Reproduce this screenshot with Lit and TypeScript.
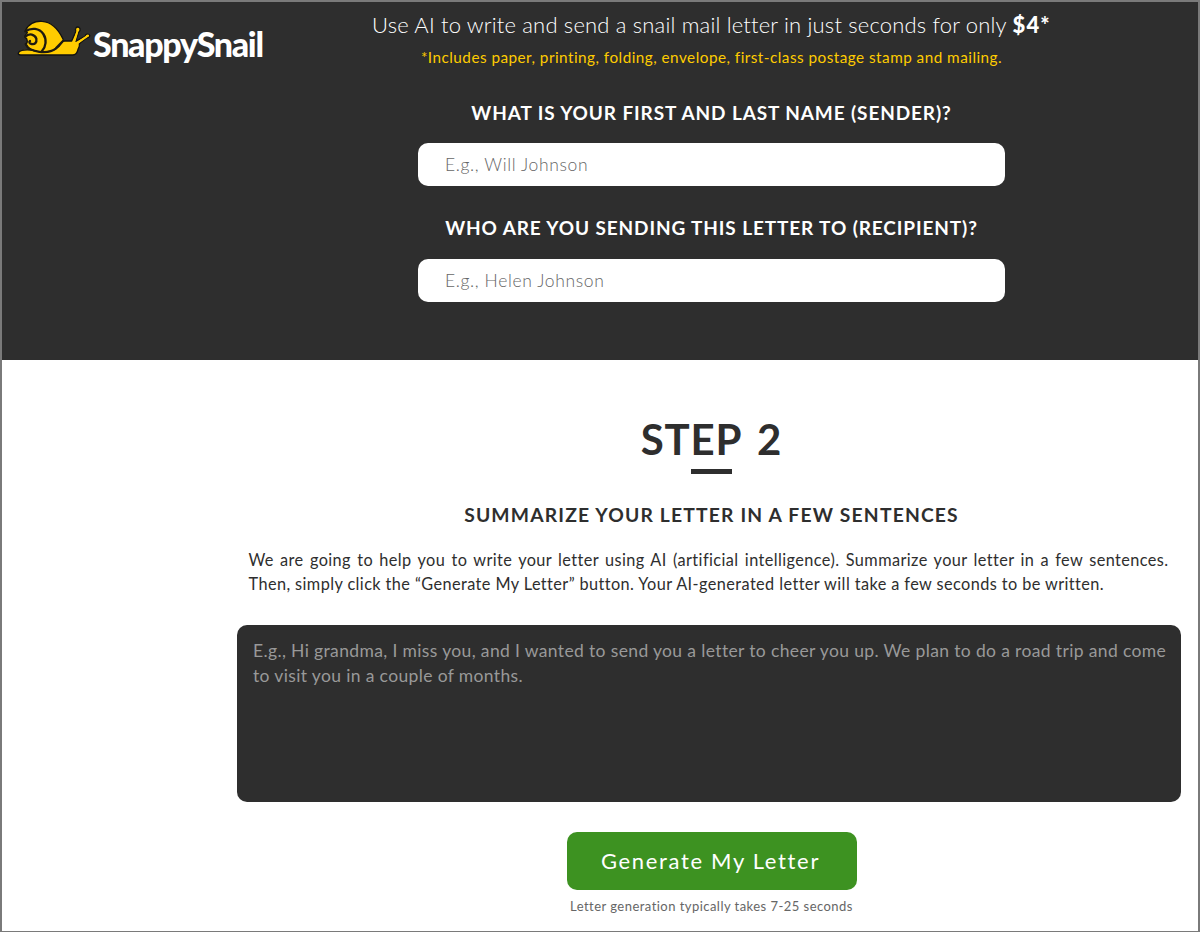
import { LitElement, css, html } from "lit";
import { customElement, property } from "lit/decorators.js";

@customElement("snail-logo")
export class SnailLogo extends LitElement {
  render() {
    return html`
      <a class="logo">
        <svg class="snail" viewBox="51 57 222 114" width="74" height="38">
          <path
            class="body"
            d="M56 157C62 149 78 149 92 150L150 152C166 146 178 124 194 123L215 123L228 94C223 85 230 79 237 82C243 88 240 93 236 96L227 124L256 108C256 101 266 101 269 106C269 112 264 114 259 114L238 131C240 137 237 142 234 148C232 159 228 164 218 165L62 165C56 165 53 162 56 157Z"
          />
          <path class="feeler" d="M222 128L234 88M228 132L264 107" />
          <path
            class="body"
            d="M77 91C84 73 104 62 126 64C160 66 178 94 189 117C192 122 189 123 187 126C176 145 158 156 132 156C105 156 84 148 76 132C84 130 84 116 75 112C75 106 77 102 82 98Z"
          />
          <path
            class="line"
            d="M76 94C94 82 118 84 130 102C141 119 138 140 126 153"
          />
          <path
            class="line"
            d="M76 110C88 98 105 103 109 116C111 128 104 134 95 132C88 131 86 126 90 123"
          />
          <path class="line" d="M78 134C88 158 146 163 167 146L189 123" />
        </svg>
        <span class="name">SnappySnail</span>
      </a>
    `;
  }

  static styles = css`
    .logo {
      display: flex;
      align-items: flex-start;
      padding: 17px 0 0 15px;
    }
    .snail {
      flex: none;
    }
    .body {
      fill: #fc0;
      stroke: #111;
      stroke-width: 4;
      stroke-linejoin: round;
    }
    .feeler {
      fill: none;
      stroke: #fc0;
      stroke-width: 6;
      stroke-linecap: round;
    }
    .line {
      fill: none;
      stroke: #1d1a10;
      stroke-width: 7;
      stroke-linecap: round;
      stroke-linejoin: round;
    }
    .name {
      margin: 5px 0 0 2px;
      color: #fff;
      font: 900 34px/40px Lato, sans-serif;
      letter-spacing: -1.3px;
    }
  `;
}

@customElement("name-field")
export class NameField extends LitElement {
  @property() label = "";
  @property() placeholder = "";

  render() {
    return html`
      <label>
        <span class="label">${this.label}</span>
        <input type="text" placeholder=${this.placeholder} />
      </label>
    `;
  }

  static styles = css`
    :host {
      display: block;
    }
    label {
      display: flex;
      flex-direction: column;
      align-items: center;
    }
    .label {
      color: #fff;
      font-size: 19px;
      font-weight: 700;
      line-height: 24px;
      letter-spacing: 0.88px;
      white-space: nowrap;
    }
    input {
      box-sizing: border-box;
      width: 587px;
      height: 43px;
      margin-top: var(--input-gap, 18px);
      padding: 0 27px;
      border: 0;
      border-radius: 10px;
      background: #fff;
      font: 300 17.5px Lato, sans-serif;
      letter-spacing: 0.63px;
    }
    input::placeholder {
      color: #666;
    }
  `;
}

@customElement("app-root")
export class AppRoot extends LitElement {
  render() {
    return html`
      <header>
        <snail-logo></snail-logo>
        <div class="column">
          <p class="offer">
            Use AI to write and send a snail mail letter in just seconds for
            only <b>$4*</b>
          </p>
          <p class="includes">
            *Includes paper, printing, folding, envelope, first-class postage
            stamp and mailing.
          </p>
          <name-field
            class="sender"
            label="WHAT IS YOUR FIRST AND LAST NAME (SENDER)?"
            placeholder="E.g., Will Johnson"
          ></name-field>
          <name-field
            class="recipient"
            label="WHO ARE YOU SENDING THIS LETTER TO (RECIPIENT)?"
            placeholder="E.g., Helen Johnson"
          ></name-field>
        </div>
      </header>
      <main>
        <h1>STEP 2</h1>
        <div class="rule"></div>
        <h2>SUMMARIZE YOUR LETTER IN A FEW SENTENCES</h2>
        <p class="intro">
          <span class="first"
            >We are going to help you to write your letter using AI (artificial
            intelligence). Summarize your letter in a few sentences.</span
          >
          <span class="second"
            >Then, simply click the “Generate My Letter” button. Your
            AI-generated letter will take a few seconds to be written.</span
          >
        </p>
        <textarea
          placeholder="E.g., Hi grandma, I miss you, and I wanted to send you a letter to cheer you up. We plan to do a road trip and come to visit you in a couple of months."
        ></textarea>
        <button>Generate My Letter</button>
        <p class="note">Letter generation typically takes 7-25 seconds</p>
      </main>
    `;
  }

  static styles = css`
    :host {
      display: flex;
      flex-direction: column;
      box-sizing: border-box;
      width: 1200px;
      height: 932px;
      overflow: hidden;
      border: 2px solid #7a7a7a;
      border-bottom-width: 1px;
      background: #fff;
      color: #2e2e2e;
      font-family: Lato, sans-serif;
    }
    p,
    h1,
    h2 {
      margin: 0;
      white-space: nowrap;
    }
    header {
      display: grid;
      grid-template-columns: 223px 973px;
      flex: none;
      height: 358px;
      background: #2e2e2e;
    }
    .column {
      display: flex;
      flex-direction: column;
      align-items: center;
    }
    .offer {
      margin-top: 9px;
      color: #fff;
      font-size: 22px;
      font-weight: 300;
      line-height: 28px;
      letter-spacing: 0.18px;
    }
    .offer b {
      font-weight: 900;
      letter-spacing: 1.2px;
    }
    .includes {
      margin-top: 8px;
      color: #fc0;
      font-size: 15.3px;
      line-height: 20px;
      letter-spacing: 0.47px;
    }
    .sender {
      margin-top: 34px;
    }
    .recipient {
      margin-top: 30px;
      --input-gap: 19px;
    }
    main {
      display: flex;
      flex-direction: column;
      align-items: center;
      width: 973px;
      margin-left: 223px;
    }
    h1 {
      margin-top: 54px;
      font-size: 42px;
      font-weight: 700;
      line-height: 50px;
      letter-spacing: 0.8px;
      word-spacing: 5px;
    }
    .rule {
      width: 41px;
      height: 5px;
      margin-top: 5px;
      background: #2e2e2e;
    }
    h2 {
      margin-top: 29px;
      font-size: 19.3px;
      font-weight: 700;
      line-height: 24px;
      letter-spacing: 1.17px;
    }
    .intro {
      display: flex;
      flex-direction: column;
      width: 920px;
      margin: 21px 0 0 -6px;
      font-size: 16.3px;
      line-height: 24px;
      letter-spacing: 0.41px;
    }
    .first {
      text-align-last: justify;
    }
    textarea {
      box-sizing: border-box;
      width: 944px;
      height: 177px;
      margin: 29px 0 0 -5px;
      padding: 13px 8px 0 16px;
      resize: none;
      border: 0;
      border-radius: 10px;
      background: #2e2e2e;
      font: 400 17.5px/25px Lato, sans-serif;
      letter-spacing: 0.36px;
    }
    textarea::placeholder {
      color: #999;
    }
    button {
      width: 290px;
      height: 58px;
      margin-top: 30px;
      padding: 0 2px 2px 0;
      border: 0;
      border-radius: 10px;
      background: #3d9221;
      color: #fff;
      font: 400 22px Lato, sans-serif;
      letter-spacing: 1.67px;
    }
    .note {
      margin-top: 7px;
      color: #666;
      font-size: 13px;
      line-height: 18px;
      letter-spacing: 0.46px;
    }
  `;
}

declare global {
  interface HTMLElementTagNameMap {
    "snail-logo": SnailLogo;
    "name-field": NameField;
    "app-root": AppRoot;
  }
}
